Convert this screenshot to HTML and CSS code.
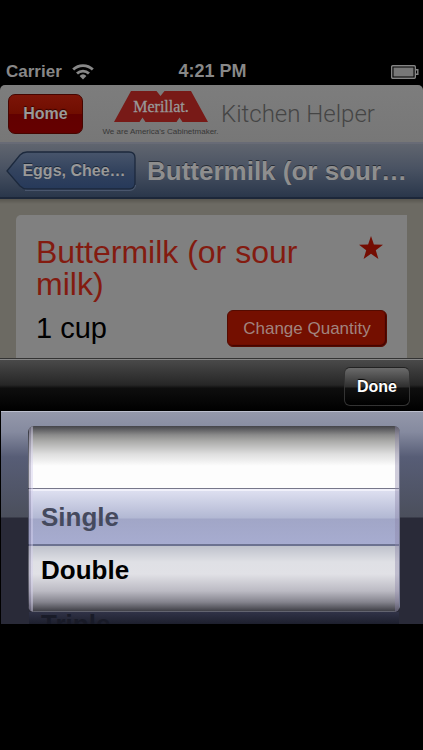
FILE: index.html
```
<!DOCTYPE html>
<html lang="en">
<head>
<meta charset="utf-8">
<meta name="viewport" content="width=device-width, initial-scale=1">
<title>Kitchen Helper</title>
<link rel="stylesheet" href="styles.css">
</head>
<body>
<div class="status">
  <div class="carrier">Carrier
    <svg width="22" height="16" viewBox="0 0 22 16" aria-hidden="true"><g fill="none" stroke="#888" stroke-width="2.8"><path d="M1.2 5.6a14 14 0 0 1 19.6 0"/><path d="M5 9.6a8.5 8.5 0 0 1 12 0"/></g><path d="M7.6 11.9a5 5 0 0 1 6.8 0L11 15.6z" fill="#888"/></svg>
  </div>
  <time class="clock">4:21 PM</time>
  <svg class="battery" width="28" height="14" viewBox="0 0 28 14" aria-hidden="true"><rect x=".7" y=".7" width="23.6" height="12.6" rx="1" fill="none" stroke="#858585" stroke-width="1.4"/><rect x="2.5" y="2.5" width="20" height="9" fill="#777"/><path d="M24.5 4.7h2.3v4.6h-2.3" fill="none" stroke="#858585" stroke-width="1.4"/></svg>
</div>
<header class="brand">
  <button class="home" type="button">Home</button>
  <div class="logo">
    <svg width="94" height="31" viewBox="0 0 94 31" role="img" aria-label="Merillat"><path d="M17 0H42.500L46.500 5L50.500 0H77L94 31H68.500L65.500 26.500L62.500 31H31.500L28.500 26.500L25.500 31H0z" fill="#781a17"/><text x="47" y="21" class="logo-name">Merillat.</text></svg>
    <span class="tagline">We are America's Cabinetmaker.</span>
  </div>
  <span class="app-name">Kitchen Helper</span>
</header>
<nav class="nav">
  <button class="back" type="button">
    <svg width="130" height="40" viewBox="0 0 130 40" aria-hidden="true"><defs><linearGradient id="bk" x2="0" y2="1"><stop offset="0" stop-color="#48556b"/><stop offset=".5" stop-color="#33435e"/><stop offset="1" stop-color="#26395a"/></linearGradient></defs><path d="M1 20L14 4Q17 1 21 1H123Q129 1 129 7V32Q129 38 123 38H21Q17 38 14 35z" fill="url(#bk)" stroke="#1c293d" stroke-width="1.3"/><path d="M19 39.300H124Q129 39 129.500 34" fill="none" stroke="#58667d" stroke-width=".8"/></svg>
    <span>Eggs, Chee…</span>
  </button>
  <h1 class="nav-title">Buttermilk (or sour…</h1>
</nav>
<main class="content">
  <section class="card">
    <div class="card-head">
      <h2>Buttermilk (or sour milk)</h2>
      <button class="star" type="button" aria-label="Favorite"><svg width="24" height="24" viewBox="0 0 24 24"><path d="M12 0L14.900 8.500L24 8.700L16.800 14.200L19.400 23L12 17.800L4.600 23L7.200 14.200L0 8.700L9.100 8.500z" fill="#740d02"/></svg></button>
    </div>
    <div class="quantity">
      <span>1 cup</span>
      <button class="change" type="button">Change Quantity</button>
    </div>
  </section>
</main>
<div class="toolbar"><button class="done" type="button">Done</button></div>
<form class="picker" aria-label="Quantity">
  <div class="wheel">
    <div class="slot blank"></div>
    <label class="slot chosen"><input type="radio" name="quantity" checked>Single</label>
    <label class="slot next"><input type="radio" name="quantity">Double</label>
  </div>
  <label class="slot beyond"><input type="radio" name="quantity">Triple</label>
</form>
</body>
</html>
```
FILE: styles.css
```
* { box-sizing: border-box; }
body { margin: 0; padding-top: 58px; min-height: 100vh; background: #000; font-family: "Liberation Sans", Arial, sans-serif; }
button { font-family: inherit; margin: 0; cursor: pointer; }
.status { height: 27px; padding: 0 4px 0 6px; display: grid; grid-template-columns: 1fr auto 1fr; align-items: center; color: #888; font-weight: bold; font-size: 17px; }
.carrier { display: flex; align-items: center; gap: 10px; }
.clock { font-size: 18px; }
.battery { justify-self: end; }

.brand { height: 57px; padding: 0 8px; display: flex; align-items: center; background: linear-gradient(#7d7d7d, #777); border-radius: 5px 5px 0 0; }
.home { width: 75px; height: 40px; padding: 0; border: 1px solid #450500; border-radius: 7px; background: linear-gradient(#7c1508, #700d00 50%, #620000 51%, #650000); color: #999; font-size: 16px; font-weight: bold; text-shadow: 0 -1px 1px #300; }
.logo { width: 117px; margin-left: 19px; padding-top: 2px; display: flex; flex-direction: column; align-items: center; }
.logo svg { display: block; }
.logo-name { font: 16px "Liberation Serif", serif; fill: #999; stroke: #999; stroke-width: .3px; text-anchor: middle; }
.tagline { padding-top: 4px; color: #373737; font-size: 8px; line-height: 12px; white-space: nowrap; }
.app-name { margin-left: 2px; color: #454545; font-family: Roboto, sans-serif; font-weight: 300; font-size: 24px; white-space: nowrap; }

.nav { height: 57px; padding: 0 14px 0 6px; display: flex; align-items: center; background: linear-gradient(#60656f, #4a5363 45%, #2a374b); border-top: 2px solid #686b76; border-bottom: 2px solid #1c2739; }
.back { flex: none; display: grid; align-items: center; padding: 0; border: 0; background: none; color: #999; font-size: 16px; font-weight: bold; text-shadow: 0 -1px 0 #1b2738; }
.back svg, .back span { grid-area: 1 / 1; }
.back span { padding-left: 6px; }
.nav-title { flex: 1; min-width: 0; margin: 0 0 0 11px; color: #8e8e8e; font-size: 26px; line-height: 32px; white-space: nowrap; text-shadow: 0 -1px 0 #282d36; }

.content { height: 159px; padding: 16px 16px 0; background: linear-gradient(#58564f, #6c6a63 5px); }
.card { height: 100%; padding: 21px 20px 0; border-radius: 5px 0 0; background: #808080; }
.card-head { display: flex; align-items: flex-start; justify-content: space-between; }
.card h2 { margin: 0; color: #831b10; font-size: 32px; font-weight: normal; line-height: 32px; }
.star { padding: 0; margin-right: 4px; border: 0; background: none; }
.star svg { display: block; }
.quantity { display: flex; align-items: center; justify-content: space-between; padding-top: 10px; font-size: 29px; }
.change { width: 160px; height: 37px; padding: 0; border: 1px solid #540b00; border-radius: 6px; background: #740f00; color: #a1847f; font-size: 17px; box-shadow: inset -1px -1px 1px #420400; }

.toolbar { height: 53px; padding: 8px 13px 0; display: flex; justify-content: flex-end; background: linear-gradient(#4b4b4b, #262626 50%, #0e0e0e 56%, #000); border-top: 1px solid #333; box-shadow: inset 0 1px #858585; }
.done { width: 66px; height: 39px; padding: 0; border: 1px solid #333; border-top-color: #222; border-radius: 6px; background: linear-gradient(#6b6b6b, #303030 50%, #101010 55%, #000); color: #fff; font-size: 16px; font-weight: bold; text-shadow: 0 -1px 1px #000; }

.picker { height: 213px; margin-left: 1px; padding: 14px 23px 0 27px; overflow: hidden; border-top: 1px solid #bcbfcd; background: linear-gradient(#9498aa, #858a9f 20px, #575d76 45px, #4b4f5c 105px, #292a38 106px, #292a38); }
.wheel { height: 186px; position: relative; display: flex; flex-direction: column; border-radius: 6px; overflow: hidden; }
.wheel::after { content: ""; position: absolute; inset: 0; border-radius: 6px; background: linear-gradient(90deg, #15172699 1px, #8b84a877 1px 3px, #d5d0ee77 3px 5px, transparent 5px calc(100% - 5px), #8b84a866 calc(100% - 5px) calc(100% - 1px), #777b93 calc(100% - 1px)); pointer-events: none; }
.slot { display: block; padding-left: 13px; font-size: 26px; font-weight: bold; }
.slot input { position: absolute; appearance: none; width: 0; height: 0; margin: 0; }
.blank { flex: none; height: 63px; background: linear-gradient(#444449, #8b8b8b 9px, #aaaaa8 15px, #dedede 28px, #fdfdfd 40px, #fdfdfd); }
.chosen { flex: none; height: 57px; line-height: 53px; border-top: 2px solid #f0f0fa; border-bottom: 2px solid #6c7290; box-shadow: 0 -1px #77778a; background: linear-gradient(#dddff0, #b2b8d3 27px, #a1a6c7 28px, #a7acd0); }
.chosen { color: #454a5e; }
.next { flex: 1; line-height: 49px; background: linear-gradient(#bfc2cc, #dfe0e5 16px, #e1e1e6 28px, #bbbac3 45px, #85848e 56px, #404047); border-bottom: 1px solid #62636f; }
.beyond { height: 13px; margin: 0 1px; padding-left: 12px; line-height: 24px; color: #191b28; background: linear-gradient(#303247, #1c1e2b); overflow: hidden; }
```
